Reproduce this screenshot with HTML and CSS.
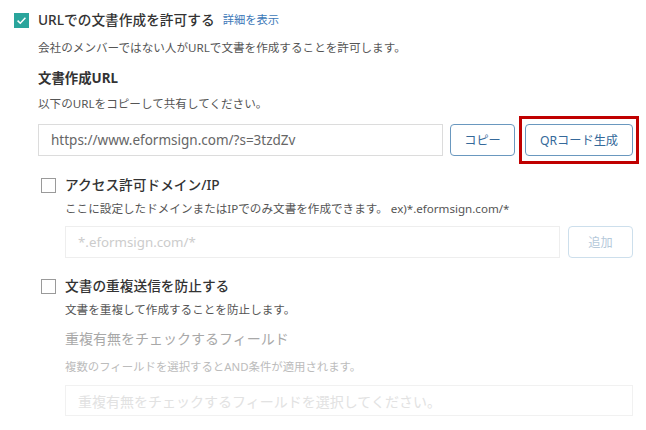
FILE: index.html
```html
<!DOCTYPE html>
<html lang="ja">
<head>
<meta charset="utf-8">
<link rel="stylesheet" href="styles.css">
</head>
<body>
<div class="page">
  <div class="opt-row main">
    <span class="cb checked">
      <svg viewBox="0 0 15 15" width="15" height="15"><path d="M3.6 7.6 L6.3 10.2 L11.4 4.8" fill="none" stroke="#fff" stroke-width="1.5"/></svg>
    </span>
    <span class="opt-title">URLでの文書作成を許可する</span>
    <a class="link">詳細を表示</a>
  </div>
  <div class="sec1">
    <p class="desc d1">会社のメンバーではない人がURLで文書を作成することを許可します。</p>
    <p class="subhead">文書作成URL</p>
    <p class="desc d2">以下のURLをコピーして共有してください。</p>
    <div class="url-row">
      <div class="field url">https://www.eformsign.com/?s=3tzdZv</div>
      <button class="btn copy">コピー</button>
      <span class="hl"><button class="btn qr">QRコード生成</button></span>
    </div>
    <div class="opt-row sub r2">
      <span class="cb"></span>
      <span class="opt-title">アクセス許可ドメイン/IP</span>
    </div>
    <div class="sec2">
      <p class="desc d3">ここに設定したドメインまたはIPでのみ文書を作成できます。 ex)*.eformsign.com/*</p>
      <div class="dom-row">
        <div class="field dom">*.eformsign.com/*</div>
        <button class="btn add">追加</button>
      </div>
    </div>
    <div class="opt-row sub r3">
      <span class="cb"></span>
      <span class="opt-title">文書の重複送信を防止する</span>
    </div>
    <div class="sec2">
      <p class="desc d4">文書を重複して作成することを防止します。</p>
      <p class="flabel">重複有無をチェックするフィールド</p>
      <p class="fdesc">複数のフィールドを選択するとAND条件が適用されます。</p>
      <div class="field sel">重複有無をチェックするフィールドを選択してください。</div>
    </div>
  </div>
</div>
</body>
</html>
```
FILE: styles.css
```css
* { box-sizing: border-box; }
html, body { margin: 0; padding: 0; background: #fff; }
body {
  font-family: "Noto Sans", "Noto Sans CJK JP", sans-serif;
  color: #333;
  width: 646px;
  height: 430px;
  overflow: hidden;
}
p { margin: 0; }
.page { padding: 12px 0 0 14px; }
.opt-row { display: flex; align-items: center; height: 16px; }
.cb {
  width: 15px; height: 15px;
  border: 1px solid #9a9a9a;
  background: #fff;
  flex: none;
  display: flex;
}
.cb.checked { background: #2aa59c; border-color: #2aa59c; }
.cb.checked svg { margin: -1px; }
.opt-title {
  font-size: 13.7px;
  font-weight: 500;
  color: #333;
  line-height: 16px;
  margin-left: 9px;
}
.link {
  font-size: 11.3px;
  color: #3c78b8;
  margin-left: 8px;
  line-height: 16px;
}
.sec1 { padding-left: 24px; width: 619px; }
.desc { font-size: 11.6px; line-height: 16px; color: #555; }
.d1 { margin-top: 12px; }
.subhead { font-size: 13.4px; font-weight: 700; line-height: 18px; margin-top: 13px; color: #333; }
.d2 { margin-top: 9px; }
.url-row { display: flex; margin-top: 12px; height: 32px; }
.field {
  border: 1px solid #dcdcdc;
  height: 32px;
  display: flex;
  align-items: center;
  padding-left: 12px;
  font-size: 13px;
}
.url { flex: 1; color: #666; font-size: 13.5px; }
.btn {
  font-family: inherit;
  height: 32px;
  background: #fff;
  border: 1px solid #6a98bf;
  border-radius: 4px;
  color: #35699a;
  font-size: 12.2px;
  padding: 0;
}
.copy { width: 65px; margin-left: 7px; }
.hl { position: relative; margin-left: 10px; display: flex; }
.hl::after {
  content: "";
  position: absolute;
  top: -8px; bottom: -8px; left: -6px; right: -6px;
  border: 3px solid #c00000;
}
.qr { width: 108px; }
.sub { margin-left: 3px; }
.r2 { margin-top: 21px; }
.r3 { margin-top: 20px; }
.sub .opt-title { margin-left: 9px; }
.sec2 { padding-left: 27px; }
.d3 { margin-top: 8px; }
.dom-row { display: flex; margin-top: 9px; }
.dom { flex: 1; border-color: #eeeeee; color: #cccccc; font-size: 13.3px; }
.add { width: 65px; margin-left: 8px; border-color: #cddfec; color: #b5c9da; }
.d4 { margin-top: 8px; }
.flabel { font-size: 14px; line-height: 18px; color: #a8a8a8; margin-top: 12px; }
.fdesc { font-size: 11.4px; line-height: 16px; color: #bcbcbc; margin-top: 11px; }
.sel { margin-top: 10px; height: 31px; border-color: #f1f1f1; color: #e2e2e2; font-size: 14px; }
```
